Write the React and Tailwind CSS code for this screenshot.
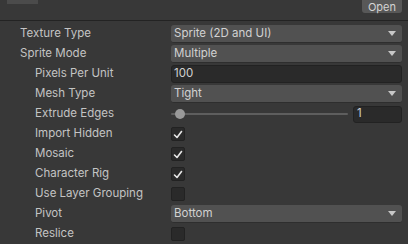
import React from 'react';

const Check = () => (
    <svg width="10" height="9" viewBox="0 0 10 9" className="block">
        <polyline points="1.5,5 4,7.5 8.5,1.5" fill="none" stroke="#e6e6e6" strokeWidth="1.6" strokeLinecap="round" strokeLinejoin="round" />
    </svg>
);

const Dropdown = ({ value }) => (
    <div className="w-full h-[18px] bg-[#515151] rounded-[3px] border-b border-[#2e2e2e] flex items-center justify-between pl-[3px] pr-[6px] text-[#d2d2d2]">
        <span>{value}</span>
        <svg width="8" height="5" viewBox="0 0 8 5">
            <polygon points="0,0 8,0 4,5" fill="#c8c8c8" />
        </svg>
    </div>
);

const Checkbox = ({ checked }) => (
    <div className="w-[14px] h-[14px] bg-[#2a2a2a] border border-[#222] rounded-[2px] flex items-center justify-center">
        {checked && <Check />}
    </div>
);

const Row = ({ label, indent, children }) => (
    <div className="h-[20px] flex items-center">
        <div className={`${indent ? 'pl-[35px]' : 'pl-[20px]'} w-[171px] shrink-0 text-[#c4c4c4]`}>{label}</div>
        <div className="w-[231px] flex items-center">{children}</div>
    </div>
);

export default function App() {
    return (
        <div className="w-[408px] h-[244px] bg-[#383838] overflow-hidden text-[11.5px]" style={{ fontFamily: 'Inter, "Liberation Sans", sans-serif' }}>
            {/* Header */}
            <div className="h-[21px] border-b border-[#232323] flex justify-between items-start px-[7px]">
                <div className="w-[31px] h-[4px] bg-[#4b4b4b]" />
                <div className="h-[13px] mr-[-1px] px-[6px] bg-[#585858] rounded-b-[3px] text-[#d4d4d4] text-[11px] leading-[12px] flex items-center">Open</div>
            </div>

            <div className="pt-[3px]">
                <Row label="Texture Type"><Dropdown value="Sprite (2D and UI)" /></Row>
                <Row label="Sprite Mode"><Dropdown value="Multiple" /></Row>
                <Row label="Pixels Per Unit" indent>
                    <div className="w-full h-[18px] bg-[#2a2a2a] rounded-[3px] border border-[#222] flex items-center pl-[2px] text-[#d2d2d2]">100</div>
                </Row>
                <Row label="Mesh Type" indent><Dropdown value="Tight" /></Row>
                <Row label="Extrude Edges" indent>
                    <div className="flex-1 h-[18px] flex items-center relative mr-[5px]">
                        <div className="w-full h-[2px] bg-[#5e5e5e] rounded" />
                        <div className="absolute left-[4px] top-[4px] w-[10px] h-[10px] rounded-full bg-[#999999]" />
                    </div>
                    <div className="w-[49px] h-[17px] bg-[#2a2a2a] border border-[#222] rounded-[3px] flex items-center pl-[3px] text-[#d2d2d2]">1</div>
                </Row>
                <Row label="Import Hidden" indent><Checkbox checked /></Row>
                <Row label="Mosaic" indent><Checkbox checked /></Row>
                <Row label="Character Rig" indent><Checkbox checked /></Row>
                <Row label="Use Layer Grouping" indent><Checkbox /></Row>
                <Row label="Pivot" indent><Dropdown value="Bottom" /></Row>
                <Row label="Reslice" indent><Checkbox /></Row>
            </div>
        </div>
    );
}
